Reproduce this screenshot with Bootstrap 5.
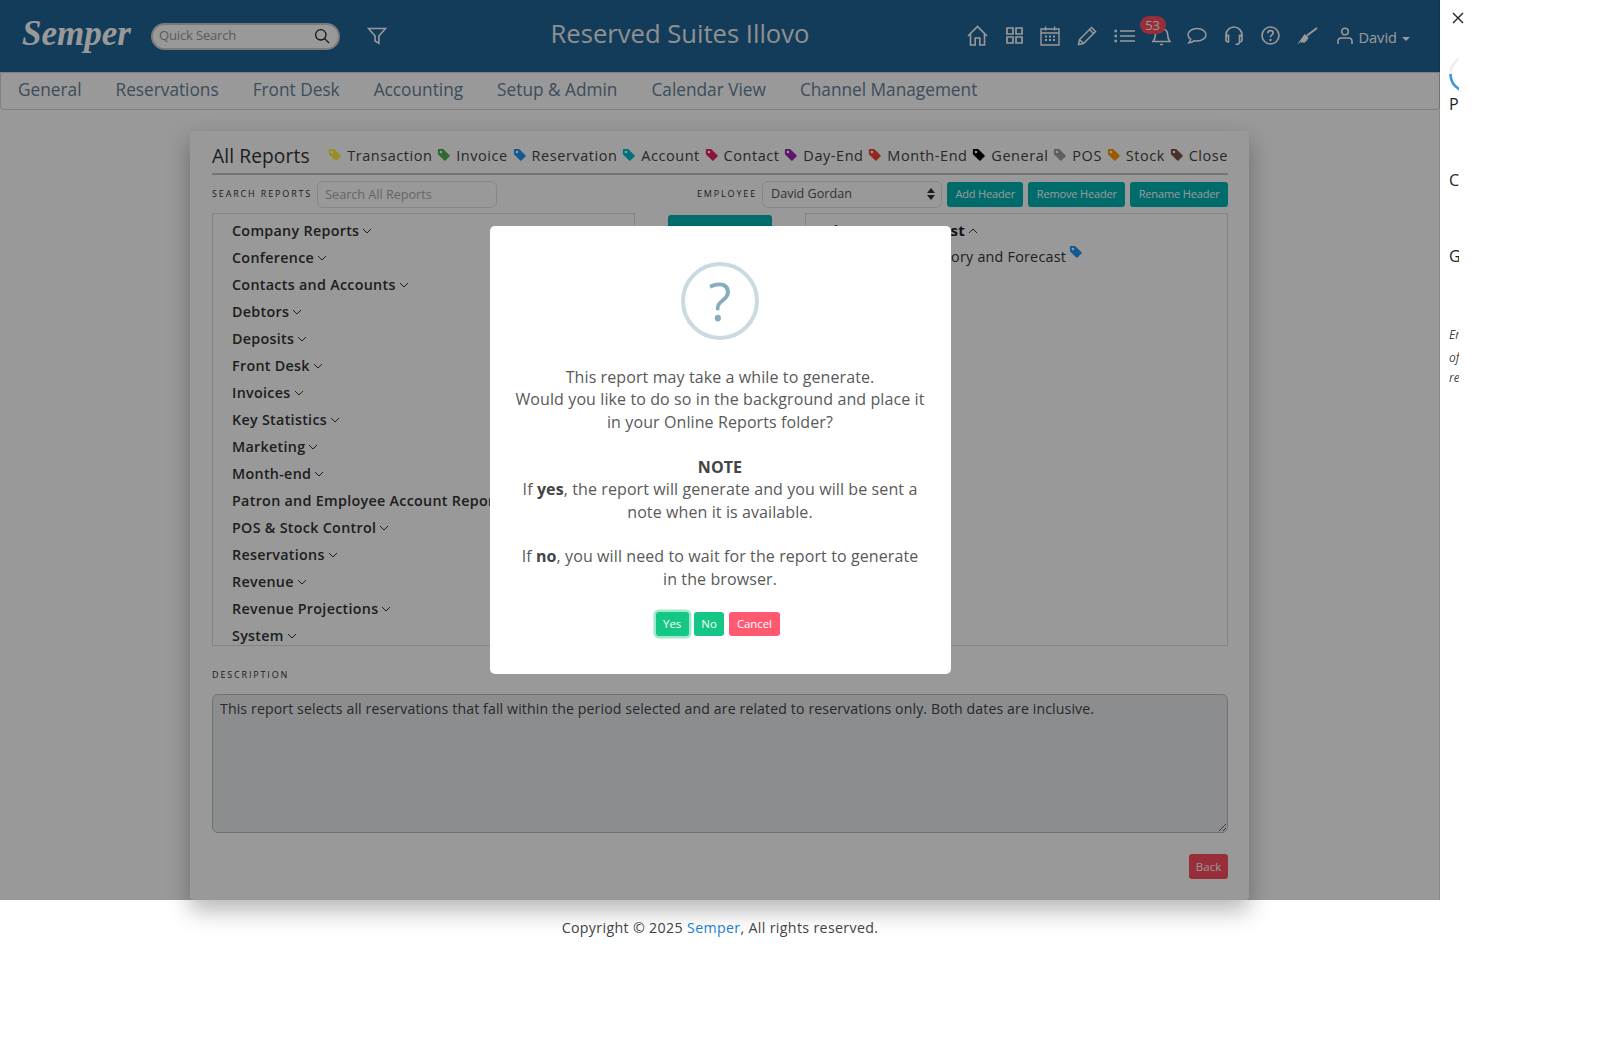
<!DOCTYPE html>
<html lang="en">
  <head>
    <meta charset="UTF-8" />
    <title>All Reports</title>
    <link rel="stylesheet" href="https://cdn.jsdelivr.net/npm/bootstrap@5.3.3/dist/css/bootstrap.min.css" />
    <style>
      html, body { height: 1043px; overflow: hidden; }
      body { font-family: "Open Sans", "Liberation Sans", sans-serif; background: #fff; color: #333; }
      .page-wrap { position: relative; height: 1043px; display: flex; }
      .main-col { width: 1440px; flex: none; }
      .top-bar { height: 72px; background: #1f6496; padding: 0 30px 0 22px; color: #fff; }
      .brand-name { font-family: "Liberation Serif", serif; font-style: italic; font-weight: 700; font-size: 35px; color: #fff; width: 110px; margin-right: 19px; margin-top: -3px; }
      .quick-search { width: 189px; height: 27px; border-radius: 14px; background: #fff; border: 2px solid #ccc; padding: 0 8px 0 6px; font-size: 13px; letter-spacing: -.15px; color: #999; }
      .filter-ico { margin-left: 27px; }
      .site-title { width: 400px; margin-left: 93px; font-size: 25.6px; font-weight: 500; color: #eee; text-align: center; margin-top: -3px; }
      .top-icons { margin-left: auto; gap: 16.8px; position: relative; }
      .top-icons svg { display: block; stroke: #fff; fill: none; }
      .alert-count { position: absolute; left: 173px; top: -7px; font-size: 13px; font-weight: 400; line-height: 18px; padding: 0 5px; height: 18px; width: 26px; background: #ff4d63; border-radius: 9px; color: #fff; }
      .top-icons .home-ico { margin-right: 2px; }
      .top-icons .person-ico { margin-left: 2px; }
      .user-name { font-size: 14.6px; margin-left: -11px; margin-top: 4px; }
      .caret-down { display: inline-block; border: 4px solid transparent; border-top-color: #fff; border-bottom: 0; margin-left: 5px; vertical-align: middle; }
      .menu-bar { height: 38px; background: #fff; border: 1px solid #d5d5d5; border-radius: 0 0 4px 4px; padding: 0 0 2px 0; font-size: 17.25px; }
      .menu-bar a { color: #668099; text-decoration: none; padding: 0 17px; line-height: 32px; white-space: nowrap; }
      .report-card { margin: 21px 0 0 190px; width: 1059px; height: 769px; border: 0; border-radius: 4px; background: #fff; box-shadow: 0 10px 24px rgba(0,0,0,.3); padding: 10px 21px 10px 22px; }
      .card-head { height: 34px; border-bottom: 2px solid #c4c4c4; padding-bottom: 3px; }
      .card-head h2 { font-size: 19.2px; font-weight: 400; margin: 0; color: #333; letter-spacing: .1px; }
      .legend-row { gap: 4.8px; font-size: 14.5px; letter-spacing: .55px; color: #444; }
      .legend-row svg { margin-right: 5px; vertical-align: -1px; }
      .tiny-label { font-size: 9px; letter-spacing: 1.85px; text-transform: uppercase; color: #333; white-space: nowrap; }
      .tool-row { height: 38px; }
      .tool-row .tiny-label { margin-right: 5px; }
      .tool-row .form-control, .tool-row .form-select { height: 27px; width: 180px; font-size: 12.6px; padding: 0 7px; color: #555; }
      .tool-row .form-select { padding-left: 8px; background-position: right 6px center; background-size: 8px 12px; background-image: url("data:image/svg+xml,%3csvg xmlns='http://www.w3.org/2000/svg' viewBox='0 0 8 12'%3e%3cpath d='M4 0l4 5H0zM4 12L0 7h8z' fill='%23333'/%3e%3c/svg%3e"); }
      .form-control::placeholder { color: #aaa; }
      .btn-teal { background: #00b3b3; border: 0; color: #fff; font-size: 11px; letter-spacing: -.15px; height: 25px; padding: 0 8.4px; white-space: nowrap; border-radius: 3px; margin-left: 5px; }
      .tree-row { height: 433px; }
      .tree-box { width: 423px; height: 433px; border: 1px solid #ddd; overflow: hidden; padding: 3px 0 0 19px; font-size: 14.3px; font-weight: 600; letter-spacing: .3px; color: #333; }
      .tree-box div { height: 27px; line-height: 27px; white-space: nowrap; }
      .tree-box svg { margin-left: 3px; vertical-align: 2px; }
      .tree-wide { width: 423px; margin-left: 33px; padding-left: 16px; }
      .tree-wide .head-item { font-size: 15px; font-weight: 700; color: #222; height: 26px; }
      .tree-wide .sub-item { padding-left: 102px; font-weight: 400; letter-spacing: .25px; }
      .tree-wide .sub-item svg { vertical-align: 3px; }
      .mid-btn { width: 104px; height: 34px; margin: 2px 0 0 33px; background: #00b3b3; color: #fff; border: 0; border-radius: 3px; font-size: 11.5px; flex: none; }
      .desc-label { margin-top: 22px; display: block; line-height: 14px; }
      .desc-area { margin-top: 12px; height: 139px; font-size: 14.1px; padding: 3px 7px; background: #e9ecef; border: 1px solid #bbb; color: #444; letter-spacing: .13px; }
      .btn-back { background: #ff4d63; border: 0; color: #fff; font-size: 11.5px; height: 25px; width: 39px; padding: 0; border-radius: 3px; margin-top: 21px; }
      .page-foot { margin-top: 17px; text-align: center; font-size: 14.2px; letter-spacing: .35px; color: #444; }
      .page-foot a { color: #1b7fd4; text-decoration: none; }
      .side-panel { width: 160px; flex: none; height: 1043px; position: relative; background: #fff; z-index: 20; }
      .side-clip { position: absolute; left: 9px; top: 0; width: 10px; height: 400px; overflow: hidden; color: #222; font-size: 16px; }
      .side-clip span { position: absolute; left: 0; line-height: 22px; }
      .side-clip em { position: absolute; left: 0; font-size: 12px; line-height: 16px; color: #444; }
      .side-close { position: absolute; left: 11px; top: 11px; }
      .dim-layer { position: absolute; left: 0; top: 0; width: 1440px; height: 900px; padding-left: 1px; background: rgba(0,0,0,.4); z-index: 10; border-right: 1px solid rgba(0,0,0,.1); }
      .ask-box { width: 461px; height: 448px; background: #fff; border: 0; border-radius: 5px; padding: 36px 24px 0; text-align: center; font-size: 16px; line-height: 22.4px; color: #595959; }
      .ask-mark { width: 78px; height: 78px; border: 4px solid #c9dae1; border-radius: 50%; color: #87adbd; font-size: 53px; line-height: 70px; margin: 0 auto 26px; }
      .ask-box p { margin: 0; letter-spacing: .1px; }
      .ask-box p.ask-gap { margin-top: 22.5px; }
      .ask-box b { color: #444; }
      .ask-actions { margin-top: 22px; gap: 5px; padding-right: 5px; }
      .ask-btn { height: 24px; padding: 0 7.6px; border: 0; border-radius: 3px; font-size: 11.5px; letter-spacing: -.1px; font-weight: 400; color: #fff; line-height: 24px; }
      .ask-yes, .ask-no { background: #14c784; }
      .ask-yes { box-shadow: 0 0 0 2.5px rgba(20,199,132,.4); }
      .ask-cancel { background: #ff5a72; }
    </style>
  </head>
  <body>
    <svg width="0" height="0" class="position-absolute">
      <symbol id="tag" viewBox="0 0 16 16"><path d="M2 1a1 1 0 0 0-1 1v4.586a1 1 0 0 0 .293.707l7 7a1 1 0 0 0 1.414 0l4.586-4.586a1 1 0 0 0 0-1.414l-7-7A1 1 0 0 0 6.586 1H2zm4 3.5a1.5 1.5 0 1 1-3 0 1.5 1.5 0 0 1 3 0z" /></symbol>
      <symbol id="chev" viewBox="0 0 10 6"><path d="M1 1l4 4 4-4" fill="none" stroke="#333" stroke-width="1" /></symbol>
    </svg>
    <div class="page-wrap">
      <div class="main-col">
        <header class="top-bar d-flex align-items-center">
          <div class="brand-name">Semper</div>
          <div class="quick-search d-flex align-items-center justify-content-between">
            <span>Quick Search</span>
            <svg width="16" height="16" viewBox="0 0 16 16" fill="none" stroke="#222" stroke-width="1.3"><circle cx="6.800" cy="6.800" r="5.200" /><path d="M10.600 10.600l4.400 4.400" /></svg>
          </div>
          <svg class="filter-ico" width="20" height="18" viewBox="0 0 20 18" fill="none" stroke="#fff" stroke-width="1.6"><path d="M1.500 1.500h17l-6.600 7.600v7.200l-3.800-2.300V9.100z" /></svg>
          <div class="site-title">Reserved Suites Illovo</div>
          <div class="top-icons d-flex align-items-center">
            <svg class="home-ico" width="21" height="21" viewBox="0 0 21 21" stroke-width="1.600"><path d="M1 11L10.500 1.500 20 11M3.500 8.500V20h4.700v-7h4.600v7h4.700V8.500" /></svg>
            <svg width="17" height="17" viewBox="0 0 17 17"><path d="M1 1h6v6H1zM10 1h6v6h-6zM1 10h6v6H1zM10 10h6v6h-6z" stroke-width="1.700" /></svg>
            <svg width="20" height="20" viewBox="0 0 20 20"><path d="M1 3h18v16H1zM1 7h18M5.500 .500v4M14.500 .500v4" stroke-width="1.400" /><path d="M5 10.500h2M9 10.500h2M13 10.500h2M5 14h2M9 14h2M13 14h2" stroke-width="2" /></svg>
            <svg width="20" height="20" viewBox="0 0 20 20"><path d="M14.500 1.500l4 4L6.500 17.500l-5 1 1-5zM12.500 3.500l4 4M2.500 13.500l4 4" stroke-width="1.500" /></svg>
            <svg width="21" height="14" viewBox="0 0 21 14"><path d="M6 2h15M6 7h15M6 12h15" stroke-width="1.500" /><path d="M.500 2h2.500M.500 7h2.500M.500 12h2.500" stroke-width="2.600" /></svg>
            <svg width="19" height="20" viewBox="0 0 19 20"><path d="M1 15.500h17c-1.800-2-2.300-3.200-2.300-6.500 0-3.500-2.300-6-6.200-6S3.300 5.500 3.300 9c0 3.300-.5 4.500-2.300 6.500zM8 18.500h3" stroke-width="1.600" /></svg>
            <span class="badge alert-count">53</span>
            <svg width="20" height="18" viewBox="0 0 20 18"><path d="M10 1.500c-5 0-9 2.700-9 6.200 0 1.800 1 3.300 2.700 4.500-.2 1.300-.9 2.600-1.900 3.600 2-.2 3.900-1 5.200-2 1 .2 2 .3 3 .3 5 0 9-2.900 9-6.400S15 1.500 10 1.500z" stroke-width="1.500" /></svg>
            <svg width="20" height="19" viewBox="0 0 20 19"><path d="M2 12V9a8 8 0 0 1 16 0v3M2 11c0-1 1-1.600 2.500-1.600V16C3 16 2 15 2 14zM18 11c0-1-1-1.600-2.500-1.600V16c1.500 0 2.500-1 2.500-2zM15.500 16c0 1.500-1.500 2.500-4 2.500" stroke-width="1.600" /></svg>
            <svg width="19" height="19" viewBox="0 0 19 19"><circle cx="9.500" cy="9.500" r="8.500" stroke-width="1.600" /><path d="M6.800 7.300c0-1.700 1.200-2.600 2.700-2.600s2.700.9 2.700 2.300c0 1.900-2.700 2-2.700 4.200" stroke-width="1.700" /><circle cx="9.500" cy="14" r=".7" stroke-width="1.100" /></svg>
            <svg width="21" height="18" viewBox="0 0 21 18"><path d="M0 17c3-.3 2.500-1.700 4-3-1.200 2 .5 2 2 1-.5 1 .5 1.200 2 .2 1.800-1.200 3-2.900 3.500-4.700L8 7C6 8.300 5.500 11 3 13.500 2 14.700 1.500 16 0 17z" style="fill:#fff;stroke:none" /><path d="M10 8.500L20 1" stroke-width="2" /></svg>
            <svg class="person-ico" width="16" height="18" viewBox="0 0 16 18"><circle cx="8" cy="4.500" r="3.300" stroke-width="1.600" /><path d="M1 17v-2.500c0-2 1.500-3.500 3.500-3.500h7c2 0 3.500 1.500 3.500 3.500V17" stroke-width="1.600" /></svg>
            <span class="user-name">David<i class="caret-down"></i></span>
          </div>
        </header>
        <nav class="menu-bar d-flex align-items-center">
          <a href="#">General</a>
          <a href="#">Reservations</a>
          <a href="#">Front Desk</a>
          <a href="#">Accounting</a>
          <a href="#">Setup &amp; Admin</a>
          <a href="#">Calendar View</a>
          <a href="#">Channel Management</a>
        </nav>
        <div class="card report-card">
          <div class="card-head d-flex align-items-center justify-content-between">
            <h2>All Reports</h2>
            <div class="legend-row d-flex">
              <span><svg width="14" height="14" fill="#ffeb3b"><use href="#tag" /></svg>Transaction</span>
              <span><svg width="14" height="14" fill="#4caf50"><use href="#tag" /></svg>Invoice</span>
              <span><svg width="14" height="14" fill="#2196f3"><use href="#tag" /></svg>Reservation</span>
              <span><svg width="14" height="14" fill="#00bcd4"><use href="#tag" /></svg>Account</span>
              <span><svg width="14" height="14" fill="#e91e63"><use href="#tag" /></svg>Contact</span>
              <span><svg width="14" height="14" fill="#9c27b0"><use href="#tag" /></svg>Day-End</span>
              <span><svg width="14" height="14" fill="#f44336"><use href="#tag" /></svg>Month-End</span>
              <span><svg width="14" height="14" fill="#000"><use href="#tag" /></svg>General</span>
              <span><svg width="14" height="14" fill="#9e9e9e"><use href="#tag" /></svg>POS</span>
              <span><svg width="14" height="14" fill="#ff9800"><use href="#tag" /></svg>Stock</span>
              <span><svg width="14" height="14" fill="#795548"><use href="#tag" /></svg>Close</span>
            </div>
          </div>
          <div class="tool-row d-flex align-items-center">
            <label class="tiny-label">Search Reports</label>
            <input class="form-control" placeholder="Search All Reports" />
            <label class="tiny-label ms-auto">Employee</label>
            <select class="form-select"><option>David Gordan</option></select>
            <button class="btn btn-teal">Add Header</button>
            <button class="btn btn-teal">Remove Header</button>
            <button class="btn btn-teal">Rename Header</button>
          </div>
          <div class="tree-row d-flex">
            <div class="tree-box flex-none">
              <div>Company Reports<svg width="10" height="6"><use href="#chev" /></svg></div>
              <div>Conference<svg width="10" height="6"><use href="#chev" /></svg></div>
              <div>Contacts and Accounts<svg width="10" height="6"><use href="#chev" /></svg></div>
              <div>Debtors<svg width="10" height="6"><use href="#chev" /></svg></div>
              <div>Deposits<svg width="10" height="6"><use href="#chev" /></svg></div>
              <div>Front Desk<svg width="10" height="6"><use href="#chev" /></svg></div>
              <div>Invoices<svg width="10" height="6"><use href="#chev" /></svg></div>
              <div>Key Statistics<svg width="10" height="6"><use href="#chev" /></svg></div>
              <div>Marketing<svg width="10" height="6"><use href="#chev" /></svg></div>
              <div>Month-end<svg width="10" height="6"><use href="#chev" /></svg></div>
              <div>Patron and Employee Account Reports<svg width="10" height="6"><use href="#chev" /></svg></div>
              <div>POS &amp; Stock Control<svg width="10" height="6"><use href="#chev" /></svg></div>
              <div>Reservations<svg width="10" height="6"><use href="#chev" /></svg></div>
              <div>Revenue<svg width="10" height="6"><use href="#chev" /></svg></div>
              <div>Revenue Projections<svg width="10" height="6"><use href="#chev" /></svg></div>
              <div>System<svg width="10" height="6"><use href="#chev" /></svg></div>
            </div>
            <button class="mid-btn">Report</button>
            <div class="tree-box tree-wide">
              <div class="head-item">History &amp; Forecast<svg width="10" height="6"><g transform="rotate(180 5 3)"><use href="#chev" /></g></svg></div>
              <div class="sub-item">History and Forecast<svg width="14" height="14" fill="#2196f3"><use href="#tag" /></svg></div>
            </div>
          </div>
          <label class="tiny-label desc-label">Description</label>
          <textarea class="form-control desc-area" disabled>This report selects all reservations that fall within the period selected and are related to reservations only. Both dates are inclusive.</textarea>
          <div class="text-end"><button class="btn btn-back">Back</button></div>
        </div>
        <footer class="page-foot">Copyright © 2025 <a href="#">Semper</a>, All rights reserved.</footer>
      </div>
      <aside class="side-panel">
        <svg class="side-close" width="14" height="14" viewBox="0 0 14 14" fill="none" stroke="#222" stroke-width="1.400"><path d="M2 2l10 10M12 2L2 12" /></svg>
        <div class="side-clip">
          <svg class="position-absolute" style="top:55px;left:0" width="38" height="38" viewBox="0 0 38 38" fill="none" stroke-width="2.500"><circle cx="19" cy="19" r="17.500" stroke="#eee" /><path d="M1.500 19a17.500 17.500 0 0 0 9 15.300" stroke="#3498db" /></svg>
          <span style="top:93px">P</span>
          <span style="top:169px">C</span>
          <span style="top:245px">G</span>
          <em style="top:327px">Er</em>
          <em style="top:350px">of</em>
          <em style="top:370px">re</em>
        </div>
      </aside>
      <div class="dim-layer d-flex align-items-center justify-content-center">
        <div class="card ask-box">
          <div class="ask-mark">?</div>
          <p>This report may take a while to generate.<br />Would you like to do so in the background and place it in your Online Reports folder?</p>
          <p class="ask-gap"><b>NOTE</b><br />If <b>yes</b>, the report will generate and you will be sent a note when it is available.</p>
          <p class="ask-gap">If <b>no</b>, you will need to wait for the report to generate in the browser.</p>
          <div class="ask-actions d-flex justify-content-center">
            <button class="btn ask-btn ask-yes">Yes</button>
            <button class="btn ask-btn ask-no">No</button>
            <button class="btn ask-btn ask-cancel">Cancel</button>
          </div>
        </div>
      </div>
    </div>
    <script src="https://cdn.jsdelivr.net/npm/bootstrap@5.3.3/dist/js/bootstrap.bundle.min.js"></script>
  </body>
</html>
